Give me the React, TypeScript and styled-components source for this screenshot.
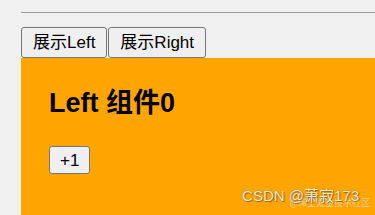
import React, { useState } from "react";
import styled, { createGlobalStyle } from "styled-components";

const Global = createGlobalStyle`
  html, body { margin: 0; padding: 0; background: #f0f0f0; }
  body { font-family: "Liberation Sans", "Noto Sans CJK SC", sans-serif; overflow: hidden; }
`;

const Page = styled.div`
  padding: 12px 0 0 21px;
  height: 215px;
  box-sizing: border-box;
  display: flex;
  flex-direction: column;
`;

const Rule = styled.hr`
  margin: 0 0 14px 0;
  border: none;
  border-top: 1px solid #9a9a9a;
  height: 0;
`;

const Tabs = styled.div`
  display: flex;
  gap: 1px;
`;

const Button = styled.button<{ $small?: boolean }>`
  font-family: "Liberation Sans", "Noto Sans CJK SC", sans-serif;
  font-size: 17px;
  color: #000;
  background: #efefef;
  border: 1px solid #767676;
  border-radius: 3px;
  height: ${(p) => (p.$small ? "28px" : "31px")};
  padding: 0 ${(p) => (p.$small ? "10px" : "11px")};
  line-height: 1;
  cursor: pointer;
`;

const Panel = styled.div`
  flex: 1;
  background: #ffa500;
  padding: 29px 28px 0 28px;
  position: relative;
`;

const Title = styled.h2`
  margin: 0 0 27px 0;
  font-size: 27px;
  font-weight: bold;
  line-height: 32px;
  color: #000;
  font-family: "Liberation Sans", "Noto Sans CJK SC", sans-serif;
`;

const Mark = styled.div`
  position: absolute;
  right: 16px;
  bottom: 10px;
  font-size: 15px;
  color: #f6ead0;
  text-shadow: 0 0 1px #7a6030, 1px 1px 1px rgba(90, 60, 10, 0.6);
  font-family: "Liberation Sans", "Noto Sans CJK SC", sans-serif;
  white-space: nowrap;
`;

const SubMark = styled.div`
  position: absolute;
  right: 5px;
  bottom: 6px;
  font-size: 9px;
  color: rgba(235, 225, 215, 0.7);
  font-family: "Noto Sans CJK SC", sans-serif;
  white-space: nowrap;
`;

export default function App() {
  const [count, setCount] = useState(0);
  return (
    <>
      <Global />
      <Page>
        <Rule />
        <Tabs>
          <Button>展示Left</Button>
          <Button>展示Right</Button>
        </Tabs>
        <Panel>
          <Title>Left 组件{count}</Title>
          <Button $small onClick={() => setCount(count + 1)}>+1</Button>
          <SubMark>@稀土掘金技术社区</SubMark>
          <Mark>CSDN @萧寂173</Mark>
        </Panel>
      </Page>
    </>
  );
}
